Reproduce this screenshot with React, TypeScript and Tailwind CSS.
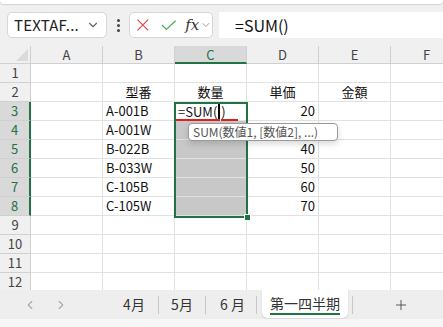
import { ChevronDown, ChevronLeft, ChevronRight, Plus } from "lucide-react";

type Cell = { text: string; align?: "left" | "center" | "right" };

const columns = ["A", "B", "C", "D", "E", "F"];

// D4 (30) sits under the function tooltip, so it is left out
const data: Record<number, Cell[]> = {
  2: [{ text: "" }, { text: "型番", align: "center" }, { text: "数量", align: "center" }, { text: "単価", align: "center" }, { text: "金額", align: "center" }],
  3: [{ text: "" }, { text: "A-001B" }, { text: "" }, { text: "20", align: "right" }],
  4: [{ text: "" }, { text: "A-001W" }, { text: "" }, { text: "" }],
  5: [{ text: "" }, { text: "B-022B" }, { text: "" }, { text: "40", align: "right" }],
  6: [{ text: "" }, { text: "B-033W" }, { text: "" }, { text: "50", align: "right" }],
  7: [{ text: "" }, { text: "C-105B" }, { text: "" }, { text: "60", align: "right" }],
  8: [{ text: "" }, { text: "C-105W" }, { text: "" }, { text: "70", align: "right" }],
};

const rowNumbers = Array.from({ length: 12 }, (_, i) => i + 1);

function SheetCell({ cell, shaded }: { cell?: Cell; shaded: boolean }) {
  const align =
    cell?.align === "center" ? "justify-center" : cell?.align === "right" ? "justify-end pr-[3px]" : "justify-start pl-[3px]";
  return (
    <div
      className={`flex h-[19px] w-[72px] shrink-0 items-center border-r border-b border-[#e1e1e1] text-[13px] text-[#111] ${align} ${
        shaded ? "bg-[#c8c8c8]" : "bg-white"
      }`}
    >
      {cell?.text}
    </div>
  );
}

export default function App() {
  return (
    <div className="flex h-[327px] w-[443px] flex-col overflow-hidden bg-[#f0f0f0] font-['Noto_Sans_CJK_JP',sans-serif]">
      {/* ribbon edge */}
      <div className="h-[4px] shrink-0 rounded-b-md bg-white shadow-[0_1px_1px_rgba(0,0,0,0.12)]" />

      {/* formula bar */}
      <div className="flex h-[42px] shrink-0 items-center pl-[7px]">
        <div className="flex h-[26px] w-[100px] items-center justify-between rounded-[5px] border border-[#d6d6d6] bg-white pl-[6px] pr-[6px] text-[15px] text-[#222]">
          <span className="tracking-[0.2px]">TEXTAF...</span>
          <ChevronDown size={14} className="text-[#666]" />
        </div>
        <div className="flex w-[22px] flex-col items-center gap-[2px]">
          <span className="h-[3px] w-[3px] rounded-full bg-[#444]" />
          <span className="h-[3px] w-[3px] rounded-full bg-[#444]" />
          <span className="h-[3px] w-[3px] rounded-full bg-[#444]" />
        </div>
        <div className="flex h-[26px] w-[84px] items-center rounded-[5px] border border-[#d6d6d6] bg-white pl-[5px]">
          <svg width="14" height="14" viewBox="0 0 14 14" className="ml-[1px]">
            <path d="M1.5 1.5 L12.5 12.5 M12.5 1.5 L1.5 12.5" stroke="#e5484d" strokeWidth="1.3" />
          </svg>
          <svg width="16" height="14" viewBox="0 0 16 14" className="ml-[11px]">
            <path d="M1 7 L5.5 11.5 L15 2.5" stroke="#4caf50" strokeWidth="1.3" fill="none" />
          </svg>
          <span className="ml-[9px] font-['DejaVu_Serif',serif] text-[15px] italic text-[#333]">fx</span>
          <ChevronDown size={12} className="ml-[1px] text-[#999]" />
        </div>
        <div className="ml-[6px] flex h-[26px] flex-1 items-center bg-white pl-[16px] text-[16px] text-[#111]">
          =SUM()
        </div>
      </div>

      {/* sheet */}
      <div className="relative h-[244px] shrink-0 overflow-hidden">
        <div className="flex h-[18px]">
          <div className="relative h-[18px] w-[31px] shrink-0 border-r border-b border-[#d0d0d0] bg-[#f0f0f0]">
            <div className="absolute right-[2px] bottom-[2px] h-0 w-0 border-b-[12px] border-l-[12px] border-b-[#dadada] border-l-transparent" />
          </div>
          {columns.map((c) => (
            <div
              key={c}
              className={`flex h-[18px] w-[72px] shrink-0 items-center justify-center border-r text-[13px] leading-none ${
                c === "C"
                  ? "border-b-2 border-r-[#d0d0d0] border-b-[#217346] bg-[#d9d9d9] pt-[1px] text-[#217346]"
                  : "border-b border-[#d0d0d0] bg-[#f0f0f0] text-[#444]"
              }`}
            >
              {c}
            </div>
          ))}
        </div>
        {rowNumbers.map((r) => {
          const selected = r >= 3 && r <= 8;
          const cells = data[r] ?? [];
          return (
            <div key={r} className="flex h-[19px]">
              <div
                className={`flex h-[19px] w-[31px] shrink-0 items-center justify-center border-b text-[13px] ${
                  selected
                    ? "border-r-2 border-b-[#d0d0d0] border-r-[#217346] bg-[#d9d9d9] text-[#217346]"
                    : "border-r border-[#d0d0d0] bg-[#f0f0f0] text-[#444]"
                }`}
              >
                {r}
              </div>
              {columns.map((c, i) => (
                <SheetCell key={c} cell={cells[i]} shaded={c === "C" && r >= 4 && r <= 8} />
              ))}
            </div>
          );
        })}

        {/* active cell editing */}
        <div className="absolute top-[57px] left-[178px] flex h-[18px] items-center text-[13px] text-[#111]">
          <span className="relative">
            =SUM(
            <span className="absolute right-[-3px] bottom-[1px] left-[-2px] h-[1.5px] bg-[#e02020]" />
          </span>
          <span className="mx-[1px] h-[18px] w-[2px] bg-black" />
          <span className="relative">
            )
            <span className="absolute right-[-12px] bottom-[1px] left-0 h-[1.5px] bg-[#e02020]" />
          </span>
        </div>

        {/* selection */}
        <div className="absolute top-[56px] left-[174px] h-[116px] w-[74px] border-2 border-[#217346]" />
        <div className="absolute top-[168px] left-[244px] h-[7px] w-[7px] border border-white bg-[#217346]" />

        {/* function tooltip */}
        <div className="absolute top-[77px] left-[188px] flex h-[18px] w-[150px] items-center rounded-[4px] border border-[#9a9a9a] bg-white pl-[4px] text-[12px] whitespace-nowrap text-[#555] shadow-[0_3px_6px_rgba(0,0,0,0.15)]">
          SUM(数値1, [数値2], ...)
        </div>
      </div>

      {/* sheet tabs */}
      <div className="flex h-[29px] shrink-0 items-center bg-[#eeeeee] text-[14px] text-[#333]">
        <ChevronLeft size={14} className="ml-[23px] text-[#aaa]" />
        <ChevronRight size={14} className="ml-[17px] text-[#aaa]" />
        <span className="ml-[53px] w-[26px] text-center">4月</span>
        <span className="ml-[11px] h-[18px] w-px bg-[#c8c8c8]" />
        <span className="ml-[11px] w-[24px] text-center">5月</span>
        <span className="ml-[11px] h-[18px] w-px bg-[#c8c8c8]" />
        <span className="ml-[14px] w-[28px] text-center tracking-[3px]">6月</span>
        <span className="ml-[8px] h-[18px] w-px bg-[#c8c8c8]" />
        <div className="ml-[5px] flex h-[28px] w-[86px] flex-col items-center justify-center self-start rounded-b-[6px] bg-white shadow-[0_1px_2px_rgba(0,0,0,0.12)]">
          <span className="leading-[18px]">第一四半期</span>
          <span className="mt-[1px] h-[2px] w-[70px] bg-[#217346]" />
        </div>
        <span className="ml-[4px] h-[18px] w-px bg-[#c8c8c8]" />
        <Plus size={16} strokeWidth={1.3} className="ml-[40px] text-[#444]" />
      </div>
      <div className="flex-1 bg-[#f6f6f6]" />
    </div>
  );
}
